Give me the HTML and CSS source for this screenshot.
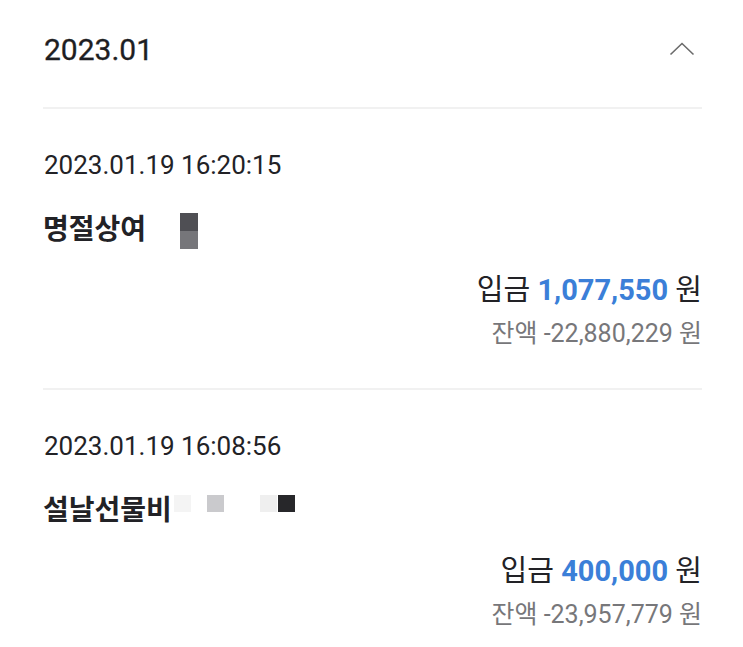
FILE: index.html
```html
<!DOCTYPE html>
<html lang="ko">
<head>
<meta charset="utf-8">
<link rel="stylesheet" href="styles.css">
</head>
<body>
<div class="page">
  <div class="month">
    <span class="month-title">2023.01</span>
    <svg class="chev" width="26" height="14" viewBox="0 0 26 14"><polyline points="1.5,12.5 13,1.5 24.5,12.5" fill="none" stroke="#6b6b6b" stroke-width="1.6"/></svg>
  </div>
  <div class="item">
    <div class="date">2023.01.19 16:20:15</div>
    <div class="title">명절상여<span class="mask tall"></span></div>
    <div class="amount">입금 <b class="num">1,077,550</b> 원</div>
    <div class="balance">잔액 -22,880,229 원</div>
  </div>
  <div class="item">
    <div class="date">2023.01.19 16:08:56</div>
    <div class="title">설날선물비<span class="sq s1"></span><span class="sq s2"></span><span class="sq s3"></span><span class="sq s4"></span></div>
    <div class="amount">입금 <b class="num">400,000</b> 원</div>
    <div class="balance">잔액 -23,957,779 원</div>
  </div>
</div>
</body>
</html>
```
FILE: styles.css
```css
html, body {
  margin: 0;
  padding: 0;
  background: #ffffff;
}
body {
  font-family: Roboto, "Noto Sans CJK KR", sans-serif;
  color: #222226;
}
.page {
  padding: 0 41px 0 43px;
}
.month {
  height: 98px;
  padding-bottom: 9px;
  display: flex;
  align-items: center;
  justify-content: space-between;
}
.month-title {
  font-size: 30px;
  font-weight: 400;
  padding-left: 1px;
  color: #1e1e22;
  -webkit-text-stroke: 0.3px #1e1e22;
}
.chev {
  margin-right: 7px;
  margin-top: 0;
}
.item {
  border-top: 2px solid #f1f1f1;
  padding: 41px 0 37px;
}
.date {
  font-size: 26px;
  line-height: 30px;
  padding-left: 1px;
}
.title {
  margin-top: 32px;
  font-size: 28px;
  font-weight: 700;
  line-height: 36px;
  height: 36px;
  display: flex;
  align-items: flex-start;
}
.mask {
  display: block;
  width: 18px;
  height: 36px;
  margin-left: 34px;
  margin-top: 1px;
  background: linear-gradient(#4f4f54 0 50%, #76767a 50% 100%);
}
.sq {
  display: block;
  width: 17px;
  height: 17px;
  margin-top: 2px;
}
.s1 { background: #f4f4f4; margin-left: 2px; }
.s2 { background: #cacacd; margin-left: 16px; }
.s3 { background: #efefef; margin-left: 36px; }
.s4 { background: #27272a; margin-left: 1px; }
.amount {
  margin-top: 22px;
  font-size: 29px;
  line-height: 40px;
  text-align: right;
}
.num {
  color: #3b7fd8;
  font-weight: 700;
}
.balance {
  margin-top: 7px;
  font-size: 25px;
  line-height: 34px;
  text-align: right;
  color: #77777a;
}
```
